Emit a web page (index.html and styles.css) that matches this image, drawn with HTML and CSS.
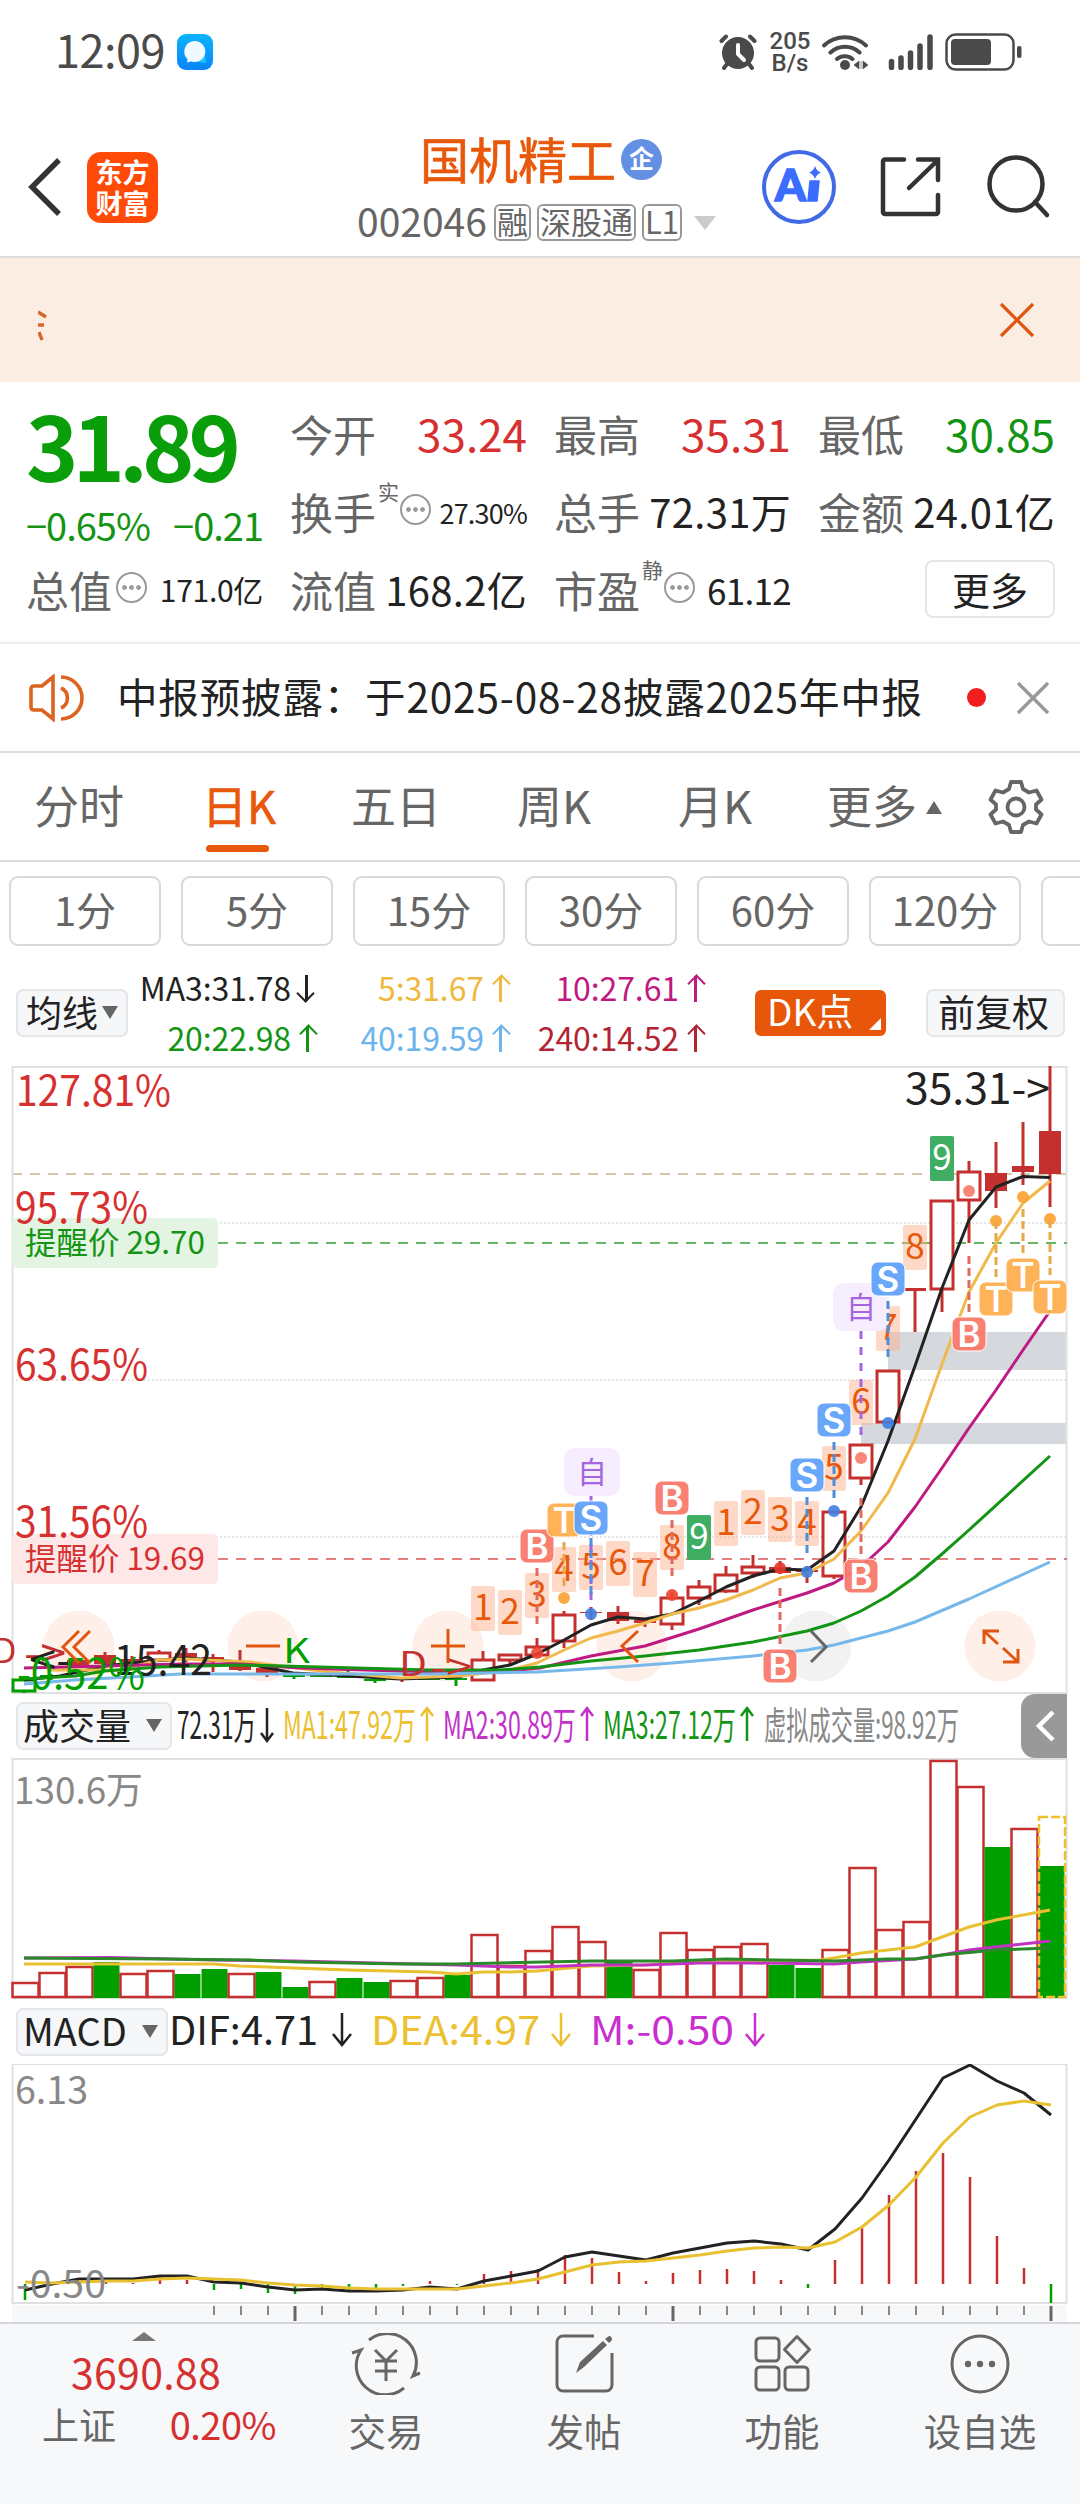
FILE: index.html
```html
<!DOCTYPE html>
<html lang="zh">
<head>
    <meta charset="UTF-8">
    <meta name="viewport" content="width=device-width, initial-scale=1.0">
    <title>国机精工 002046</title>
    <link rel="stylesheet" href="styles.css">
    <script src="chart.js" defer></script>
</head>
<body>
    <!-- 状态栏 -->
    <div class="status-bar">
        <span class="time">12:09</span>
        <svg class="app-dot" width="36" height="36" viewBox="0 0 36 36">
            <defs><linearGradient id="blueBg" x1="0" y1="0" x2="0" y2="1"><stop offset="0" stop-color="#0cb4fb"/><stop offset="1" stop-color="#0a84fa"/></linearGradient></defs>
            <rect width="36" height="36" rx="9" fill="url(#blueBg)"/>
            <path d="M20 24l8-4 1 9-7-1z" fill="#19c8fb"/>
            <path d="M17 7a11 10.500 0 1 1-3 20.500l-4 1 .5-3.500A10.500 10.500 0 0 1 17 7z" fill="#eefaff"/>
        </svg>
        <div class="status-right">
            <svg class="alarm" width="38" height="36" viewBox="0 0 38 36">
                <circle cx="19" cy="19" r="16" fill="#4a4a4a"/>
                <path d="M2.500 7L7 2.500M35.500 7L31 2.500M8 30l-3 4M30 30l3 4" stroke="#4a4a4a" stroke-width="4" stroke-linecap="round"/>
                <path d="M19 11v9l6 6" stroke="#fff" stroke-width="4" stroke-linecap="round" fill="none"/>
            </svg>
            <div class="speed"><span>205</span><span>B/s</span></div>
            <svg class="wifi" width="46" height="36" viewBox="0 0 46 36">
                <path d="M2 11.500a31 31 0 0 1 42 0M8.500 18.500a21 21 0 0 1 29 0M15 25a12 12 0 0 1 15.500 0" stroke="#4a4a4a" stroke-width="4" stroke-linecap="round" fill="none"/>
                <circle cx="23" cy="31" r="5" fill="#4a4a4a"/>
                <path d="M32 31l5-4v8zM39 27v8M46 31l-5-4v8z" fill="#4a4a4a" stroke="#4a4a4a" stroke-width=".6"/>
            </svg>
            <svg class="signal" width="46" height="36" viewBox="0 0 46 36">
                <path d="M3.500 27.500v6M13 24v9.500M22.500 19v14.500M32 12v21.500M42 3v30.500" stroke="#4a4a4a" stroke-width="5.500" stroke-linecap="round"/>
            </svg>
            <svg width="78" height="40" viewBox="0 0 78 40">
                <rect x="1.500" y="2.500" width="67" height="35" rx="9" fill="none" stroke="#4a4a4a" stroke-width="2.500"/>
                <rect x="6" y="7" width="40" height="26" rx="4" fill="#4a4a4a"/>
                <rect x="72" y="14" width="4.500" height="12" rx="2" fill="#4a4a4a"/>
            </svg>
        </div>
    </div>

    <!-- 标题栏 -->
    <div class="nav">
        <svg class="back" width="36" height="60" viewBox="0 0 36 60"><path d="M32 3L5 30l27 27" fill="none" stroke="#333" stroke-width="5.500"/></svg>
        <div class="logo"><span>东方</span><span>财富</span></div>
        <div class="stock">
            <div class="stock-name">国机精工<span class="qi">企</span></div>
            <div class="stock-code">
                <span class="code">002046</span><span class="tag">融</span><span class="tag">深股通</span><span class="tag">L1</span>
                <svg width="24" height="16" viewBox="0 0 24 16"><path d="M1 1h22L12 15z" fill="#ccc"/></svg>
            </div>
        </div>
        <div class="nav-icons">
            <svg width="76" height="76" viewBox="0 0 76 76">
                <circle cx="38" cy="38" r="35" fill="#fff" stroke="#4169e8" stroke-width="4"/>
                <text x="14" y="52" class="ai">A</text>
                <path d="M49 32h9l-2 20h-9z" fill="#3b6bff" stroke="#3b6bff" stroke-width="1.500" stroke-linejoin="round"/>
                <path d="M54 17q1.500 5 6 6.500-4.500 1.500-6 6.500-1.500-5-6-6.500 4.500-1.500 6-6.500z" fill="#3b6bff"/>
            </svg>
            <svg class="share" width="62" height="62" viewBox="0 0 62 62">
                <path d="M24 3.500H5a2 2 0 0 0-2 2V56a2 2 0 0 0 2 2h51a2 2 0 0 0 2-2V39M38 3.500h20V24M57 5L29 32" fill="none" stroke="#333" stroke-width="4.500" stroke-linecap="round"/>
            </svg>
            <svg width="66" height="66" viewBox="0 0 66 66">
                <circle cx="31" cy="30" r="26.500" fill="none" stroke="#333" stroke-width="4.500"/>
                <path d="M50 48l12 13" stroke="#333" stroke-width="4.500" stroke-linecap="round"/>
            </svg>
        </div>
    </div>

    <!-- 滚动横幅 -->
    <div class="banner">
        <svg class="marquee" width="9" height="32" viewBox="0 0 9 32"><path d="M0 2l8 5M0 15h6M1 22l3 8" stroke="#d9642a" stroke-width="3.400" fill="none"/></svg>
        <svg width="36" height="36" viewBox="0 0 36 36"><path d="M2 2l32 32M34 2L2 34" stroke="#e0560f" stroke-width="3.200"/></svg>
    </div>

    <!-- 报价 -->
    <div class="quote">
        <div class="price-box">
            <div class="price">31.89</div>
            <div class="change"><span>−0.65%</span><span>−0.21</span></div>
        </div>
        <div class="cell"><label>今开</label><b class="red">33.24</b></div>
        <div class="cell"><label>最高</label><b class="red">35.31</b></div>
        <div class="cell"><label>最低</label><b class="green">30.85</b></div>
        <div class="cell"><label>换手<sup>实</sup></label><i class="more-dot"></i><b class="small">27.30%</b></div>
        <div class="cell"><label>总手</label><b class="mid">72.31万</b></div>
        <div class="cell"><label>金额</label><b class="mid">24.01亿</b></div>
        <div class="cell"><label>总值</label><i class="more-dot"></i><b class="small2">171.0亿</b></div>
        <div class="cell"><label>流值</label><b class="mid">168.2亿</b></div>
        <div class="cell"><label>市盈<sup>静</sup></label><i class="more-dot"></i><b class="small3">61.12</b></div>
        <div class="cell"><button class="more-btn">更多</button></div>
    </div>

    <!-- 公告 -->
    <div class="notice">
        <svg width="56" height="48" viewBox="0 0 56 48">
            <path d="M24 3L13 12H5q-3 0-3 3v18q0 3 3 3h8l11 9zM32 14a11 11 0 0 1 0 20M32 3a21 21 0 0 1 0 42" fill="none" stroke="#dd6420" stroke-width="3.600"/>
        </svg>
        <span class="notice-text">中报预披露：于2025-08-28披露2025年中报</span>
        <i class="red-dot"></i>
        <svg width="34" height="34" viewBox="0 0 34 34"><path d="M2 2l30 30M32 2L2 32" stroke="#999" stroke-width="3.400"/></svg>
    </div>

    <!-- 周期 -->
    <div class="tabs">
        <span class="tab t1">分时</span>
        <span class="tab t2 active">日K</span>
        <span class="tab t3">五日</span>
        <span class="tab t4">周K</span>
        <span class="tab t5">月K</span>
        <span class="tab t6">更多<svg width="18" height="14" viewBox="0 0 18 14"><path d="M9 0l8 13H1z" fill="#666"/></svg></span>
        <svg class="gear" width="56" height="56" viewBox="0 0 56 56">
            <path d="M23 3h10l2 7 6 3.500 7.500-2 5 9-5.500 5v5l5.500 5-5 9-7.500-2L35 46l-2 7H23l-2-7-6-3.500-7.500 2-5-9 5.500-5v-5l-5.500-5 5-9 7.500 2L21 10z" fill="none" stroke="#666" stroke-width="3.800" stroke-linejoin="round"/>
            <circle cx="28" cy="28" r="8.500" fill="none" stroke="#666" stroke-width="3.800"/>
        </svg>
    </div>
    <div class="minutes">
        <span>1分</span><span>5分</span><span>15分</span><span>30分</span><span>60分</span><span>120分</span><span></span>
    </div>

    <!-- 均线指标 -->
    <div class="ma-bar">
        <div class="sel sel-ma">均线<i class="tri"></i></div>
        <div class="ma-grid">
            <span class="c-black">MA3:31.78<i class="arr down"></i></span>
            <span class="c-yellow">5:31.67<i class="arr"></i></span>
            <span class="c-pink">10:27.61<i class="arr"></i></span>
            <span class="c-green">20:22.98<i class="arr"></i></span>
            <span class="c-blue">40:19.59<i class="arr"></i></span>
            <span class="c-red">240:14.52<i class="arr"></i></span>
        </div>
        <div class="dk">DK点</div>
        <div class="sel sel-fq">前复权</div>
    </div>

    <svg class="chart" id="kChart" width="1080" height="628" viewBox="0 1066 1080 628"></svg>

    <div class="vol-bar">
        <div class="sel sel-vol">成交量<i class="tri"></i></div>
        <svg width="850" height="64" viewBox="171 1694 850 64" id="volText"></svg>
        <div class="fold"><svg width="20" height="32" viewBox="0 0 20 32"><path d="M17 2L3 16l14 14" fill="none" stroke="#fff" stroke-width="4.500"/></svg></div>
    </div>
    <svg class="chart" id="volChart" width="1080" height="242" viewBox="0 1758 1080 242"></svg>

    <div class="macd-bar">
        <div class="sel sel-macd">MACD<i class="tri"></i></div>
        <svg width="800" height="64" viewBox="167 2000 800 64" id="macdText"></svg>
    </div>
    <svg class="chart" id="macdChart" width="1080" height="258" viewBox="0 2064 1080 258"></svg>

    <!-- 底部菜单 -->
    <div class="footer">
        <div class="index">
            <svg width="24" height="9" viewBox="0 0 24 9"><path d="M12 0l12 9H0z" fill="#777"/></svg>
            <div class="index-value">3690.88</div>
            <div class="index-row"><span>上证</span><b>0.20%</b></div>
        </div>
        <div class="menu">
            <svg width="70" height="62" viewBox="0 0 70 62">
                <path d="M18 7A29 29 0 0 1 62 43L69 40M53 55A29 29 0 0 1 10 17L1 20" fill="none" stroke="#666" stroke-width="3"/>
                <path d="M24 17l11 11 11-11M35 28v20M24 28h22M24 38h22" fill="none" stroke="#666" stroke-width="3"/>
            </svg>
            <span>交易</span>
        </div>
        <div class="menu">
            <svg width="60" height="62" viewBox="0 0 60 62">
                <path d="M40 3H9a6 6 0 0 0-6 6v43a6 6 0 0 0 6 6h43a6 6 0 0 0 6-6V20" fill="none" stroke="#666" stroke-width="3"/>
                <path d="M22 40l4-11 23-21 4 4-23 22zM51 6l4-3q3 0 3 4l-3 3z" fill="#666"/>
            </svg>
            <span>发帖</span>
        </div>
        <div class="menu">
            <svg width="60" height="62" viewBox="0 0 60 62">
                <g fill="none" stroke="#666" stroke-width="3"><rect x="4" y="5" width="23" height="23" rx="4"/><rect x="4" y="34" width="23" height="23" rx="4"/><rect x="33" y="34" width="23" height="23" rx="4"/><path d="M45 3.500L57.500 16.500 45 29.500 32.500 16.500z" stroke-linejoin="round"/></g>
            </svg>
            <span>功能</span>
        </div>
        <div class="menu">
            <svg width="62" height="62" viewBox="0 0 62 62">
                <circle cx="31" cy="31" r="28" fill="none" stroke="#666" stroke-width="3"/>
                <g fill="#666"><circle cx="19" cy="31" r="3.200"/><circle cx="31" cy="31" r="3.200"/><circle cx="43" cy="31" r="3.200"/></g>
            </svg>
            <span>设自选</span>
        </div>
    </div>
</body>
</html>
```
FILE: styles.css
```css
* {
    box-sizing: border-box;
}
body {
    margin: 0;
    width: 1080px;
    overflow-x: hidden;
    background: #fff;
    color: #222;
    font-family: "Noto Sans CJK SC", sans-serif;
}
svg {
    display: block;
    flex: none;
}
button {
    font-family: inherit;
}
.red { color: #d63031; }
.green { color: #149414; }

/* 状态栏 */
.status-bar {
    display: flex;
    align-items: center;
    height: 104px;
    padding: 0 57px 0 55px;
    color: #4a4a4a;
}
.time {
    width: 122px;
    font-size: 45px;
    line-height: 64px;
    margin-top: -6px;
    letter-spacing: -.5px;
}
.status-right {
    display: flex;
    align-items: center;
    margin-left: auto;
}
.speed {
    display: flex;
    flex-direction: column;
    width: 46px;
    margin-left: 10px;
    font: 500 24px/22px Roboto, sans-serif;
    text-align: center;
}
.wifi { margin-left: 9px; }
.signal { margin: 0 11px 0 20px; }

/* 标题栏 */
.nav {
    display: flex;
    align-items: center;
    height: 154px;
    padding: 14px 29px 0 27px;
    border-bottom: 2px solid #ddd;
}
.logo {
    display: flex;
    flex-direction: column;
    justify-content: center;
    width: 71px;
    height: 71px;
    margin-left: 24px;
    border-radius: 14px;
    background: #ff4a08;
    color: #fff;
    font-size: 27px;
    font-weight: 700;
    line-height: 31px;
    text-align: center;
}
.stock {
    width: 366px;
    margin-left: 199px;
    margin-top: 11px;
}
.stock-name {
    display: flex;
    align-items: center;
    justify-content: center;
    height: 60px;
    padding-left: 2px;
    color: #e8580a;
    font-size: 49px;
    font-weight: 400;
    -webkit-text-stroke: .6px #e8580a;
}
.qi {
    width: 41px;
    height: 41px;
    margin-left: 5px;
    margin-top: 4px;
    border-radius: 50%;
    background: #6490e4;
    color: #fff;
    font-size: 25px;
    font-weight: 700;
    line-height: 37px;
    text-align: center;
    -webkit-text-stroke: 0;
}
.stock-code {
    display: flex;
    align-items: center;
    height: 70px;
    color: #666;
    font-size: 39px;
    white-space: nowrap;
}
.code {
    width: 137px;
    line-height: 50px;
    margin-top: -6px;
}
.tag {
    flex: none;
    height: 37px;
    padding: 0 1px;
    margin-right: 6px;
    border: 2px solid #999;
    border-radius: 6px;
    font-size: 31px;
    line-height: 29px;
}
.stock-code svg { margin-left: 5px; }
.nav-icons {
    display: flex;
    align-items: center;
    margin-left: auto;
}
.share { margin: 0 43px 0 43px; }
.ai {
    font: 900 44px Lato, sans-serif;
    fill: #3b6bff;
    stroke: #3b6bff;
    stroke-width: 1.5;
}

.banner {
    display: flex;
    align-items: center;
    justify-content: space-between;
    height: 124px;
    padding: 0 45px 0 38px;
    background: #fcede3;
}
.marquee { margin-top: 12px; }

/* 报价 */
.quote {
    display: grid;
    grid-template-columns: repeat(4, 237px);
    grid-auto-rows: 78px;
    column-gap: 27px;
    height: 262px;
    padding: 12px 0 0 26px;
    border-bottom: 2px solid #eee;
}
.price-box {
    grid-row: span 2;
    color: #0a9f0a;
}
.price {
    height: 108px;
    padding-top: 2px;
    font-size: 89px;
    font-weight: 700;
    line-height: 96px;
    letter-spacing: -6px;
}
.change {
    display: flex;
    justify-content: space-between;
    color: #149414;
    font-size: 38px;
    line-height: 46px;
    letter-spacing: -1px;
}
.cell {
    display: flex;
    align-items: center;
    justify-content: space-between;
    white-space: nowrap;
}
.cell label {
    position: relative;
    color: #666;
    font-size: 43px;
}
.cell sup {
    position: absolute;
    left: 88px;
    top: -1px;
    font-size: 21px;
    line-height: 24px;
}
.cell b {
    font-size: 44px;
    font-weight: 400;
}
.cell b.mid { font-size: 40px; letter-spacing: .3px; }
.cell b.small { font-size: 27px; letter-spacing: -.8px; padding-top: 2px; }
.cell b.small2 { font-size: 30px; letter-spacing: -.3px; }
.cell b.small3 { font-size: 35px; letter-spacing: -.7px; }
.more-dot {
    width: 31px;
    height: 31px;
    border: 2px solid #999;
    border-radius: 50%;
    margin: 0 0 3px 4px;
    background: radial-gradient(circle, #999 2px, transparent 2.6px) center / 7px 7px;
    background-size: 7px 31px;
    background-repeat: repeat-x;
    background-clip: content-box;
    padding: 0 3px;
}
sup { display: block; }
.cell label:has(sup) + .more-dot { margin-left: 24px; }
.cell .small, .cell .small2, .cell .small3 { margin-left: auto; }
.more-btn {
    width: 130px;
    height: 58px;
    margin-left: auto;
    border: 2px solid #e6e6e6;
    border-radius: 8px;
    background: #fff;
    color: #222;
    font-size: 38px;
    line-height: 46px;
    padding: 0;
}

.notice {
    display: flex;
    align-items: center;
    height: 109px;
    padding: 0 30px 0 29px;
    border-bottom: 2px solid #ddd;
}
.notice-text {
    width: 848px;
    margin: -5px 0 0 32px;
    font-size: 40.5px;
    white-space: nowrap;
    letter-spacing: .85px;
}
.red-dot {
    width: 19px;
    height: 19px;
    margin-left: 3px;
    margin-right: 30px;
    border-radius: 50%;
    background: #f21d1d;
}

/* 周期 */
.tabs {
    display: flex;
    align-items: center;
    height: 109px;
    padding-left: 34px;
    border-bottom: 2px solid #ddd;
    color: #666;
    font-size: 45px;
}
.tab {
    position: relative;
    display: flex;
    align-items: center;
    height: 107px;
    padding-bottom: 4px;
}
.t1 { width: 168px; }
.t2 { width: 149px; }
.t3 { width: 166px; }
.t4 { width: 161px; }
.t5 { width: 149px; }
.t6 { width: 161px; }
.t6 svg { margin: 6px 0 0 8px; }
.active {
    color: #e8580a;
    font-weight: 400;
    -webkit-text-stroke: .6px #e8580a;
}
.active::after {
    content: "";
    position: absolute;
    left: 4px;
    bottom: 8px;
    width: 63px;
    height: 7px;
    border-radius: 4px;
    background: #e8580a;
}
.minutes {
    display: flex;
    gap: 20px;
    height: 98px;
    padding: 14px 0 0 9px;
    overflow: hidden;
    color: #666;
}
.minutes span {
    flex: 0 0 152px;
    height: 70px;
    border: 2px solid #d8d8d8;
    border-radius: 9px;
    font-size: 40px;
    line-height: 62px;
    text-align: center;
}

/* 指标栏 */
.ma-bar {
    display: flex;
    align-items: center;
    height: 106px;
    padding-left: 16px;
}
.sel {
    display: flex;
    align-items: center;
    justify-content: space-between;
    height: 48px;
    padding: 0 8px;
    border: 2px solid #e4e6ea;
    border-radius: 7px;
    background: #f6f7f9;
    color: #222;
    font-size: 36px;
    line-height: 40px;
    white-space: nowrap;
}
.tri {
    border: 8px solid transparent;
    border-top: 13px solid #666;
    border-bottom: 0;
}
.sel-ma { width: 112px; padding: 0 8px 4px; margin-top: -1px; }
.sel-fq { width: 139px; padding: 0 10px 4px; margin: -1px 0 0 40px; font-size: 37px; }
.sel-ma .tri { margin-top: 4px; }
.sel-vol { width: 156px; padding: 0 8px 4px 5px; margin-top: 0; }
.sel-macd { width: 152px; padding: 0 8px 4px 5px; font-size: 38px; margin-top: -1px; }
.sel-vol .tri, .sel-macd .tri { margin-top: 3px; }
.ma-grid {
    display: grid;
    grid-template-columns: 187px 193px 195px;
    grid-auto-rows: 50px;
    font-size: 32px;
    margin-top: -3px;
}
.ma-grid span {
    display: flex;
    align-items: center;
    justify-content: flex-end;
    letter-spacing: -.1px;
}
.arr {
    position: relative;
    width: 16px;
    height: 27px;
    margin: 3px 0 0 8px;
}
.arr::before {
    content: "";
    position: absolute;
    left: 7px;
    top: 1px;
    width: 2.5px;
    height: 26px;
    background: currentColor;
}
.arr::after {
    content: "";
    position: absolute;
    left: 2.5px;
    top: 2px;
    width: 11px;
    height: 11px;
    border: solid currentColor;
    border-width: 2.5px 0 0 2.5px;
    transform: rotate(45deg);
}
.down { transform: rotate(180deg); }
.c-black { color: #222; }
.c-yellow { color: #f0b840; }
.c-pink { color: #bf1a80; }
.c-green { color: #149414; }
.c-blue { color: #6cb4ec; }
.c-red { color: #b22430; }
.dk {
    position: relative;
    width: 131px;
    height: 46px;
    margin: -1px 0 0 52px;
    padding-left: 12px;
    border-radius: 6px;
    background: #e8560a;
    color: #fff;
    font-size: 37px;
    line-height: 40px;
}
.dk::after {
    content: "";
    position: absolute;
    right: 5px;
    bottom: 6px;
    border-left: 12px solid transparent;
    border-bottom: 12px solid #fff;
}
.vol-bar, .macd-bar {
    display: flex;
    align-items: center;
    height: 64px;
    padding-left: 16px;
}
.fold {
    display: flex;
    align-items: center;
    justify-content: center;
    width: 46px;
    height: 64px;
    margin-left: -1px;
    border-radius: 14px 0 0 14px;
    background: #999;
}
.fold svg { margin-left: 3px; }
.chart text { font-family: "Noto Sans CJK SC", sans-serif; }
.chart .mark { font-family: Inter, sans-serif; font-weight: 600; }

/* 底部 */
.footer {
    display: flex;
    height: 182px;
    border-top: 2px solid #d4d5d8;
    background: #f6f8fa;
    color: #666;
}
.index {
    width: 287px;
    padding-top: 8px;
}
.index svg { margin-left: 132px; }
.index-value {
    height: 58px;
    margin: 1px 0 0 71px;
    color: #d63031;
    font-size: 41px;
    line-height: 58px;
    letter-spacing: .3px;
}
.index-row {
    display: flex;
    justify-content: space-between;
    padding: 3px 11px 0 42px;
    font-size: 37px;
    line-height: 42px;
}
.index-row b { color: #d63031; font-weight: 400; font-size: 38px; letter-spacing: -.5px; }
.menu {
    display: flex;
    flex-direction: column;
    align-items: center;
    width: 198px;
    padding-top: 9px;
    font-size: 37.5px;
    line-height: 50px;
}
.menu span { margin-top: 10px; }
```
FILE: chart.js
```javascript
const RED = '#c4302f', GREEN = '#009f00', STEP = 27, X0 = 24;
const cx = i => X0 + STEP * i;

function line(x1, y1, x2, y2, color, w = 2, dash = '') {
    return `<line x1="${x1}" y1="${y1}" x2="${x2}" y2="${y2}" stroke="${color}" stroke-width="${w}" stroke-dasharray="${dash}"/>`;
}
function rect(x, y, w, h, fill, extra = '') {
    return `<rect x="${x}" y="${y}" width="${w}" height="${h}" fill="${fill}" ${extra}/>`;
}
function poly(pts, color, w = 3) {
    return `<polyline points="${pts}" fill="none" stroke="${color}" stroke-width="${w}" stroke-linejoin="round"/>`;
}
// len 为文字占用宽度
function text(s, x, y, size, color, len, extra = '') {
    const fit = len ? `textLength="${len}" lengthAdjust="spacingAndGlyphs"` : '';
    return `<text x="${x}" y="${y}" font-size="${size}" fill="${color}" ${fit} ${extra}>${s}</text>`;
}
function arrow(x, top, bottom, up, color, r = 6) {
    const t = up ? top : bottom, d = up ? r + 2 : -r - 2;
    return `<path d="M${x} ${top}V${bottom}M${x - r} ${t + d}L${x} ${t}L${x + r} ${t + d}" fill="none" stroke="${color}" stroke-width="2.5"/>`;
}
function frame(top, bottom) {
    return `<rect x="12.500" y="${top}" width="1054" height="${bottom - top}" fill="none" stroke="#e0e0e0" stroke-width="2"/>`;
}

// [最高, 实体上, 实体下, 最低, 类型] r空心 R实心 g空心绿 G实心绿
const candles = [
    [1680, 1680, 1691, 1693, 'g'], [1674, 1675, 1678, 1680, 'G'], [1658, 1660, 1666, 1668, 'R'], [1652, 1655, 1664, 1666, 'R'],
    [1656, 1659, 1662, 1664, 'R'], [1650, 1653, 1660, 1662, 'r'], [1648, 1653, 1657, 1662, 'R'], [1654, 1657, 1662, 1672, 'R'],
    [1650, 1664, 1670, 1671, 'R'], [1666, 1668, 1674, 1677, 'R'], [1672, 1675, 1677, 1679, 'G'], [1674, 1675, 1677, 1677, 'G'],
    [1668, 1676, 1678, 1678, 'G'], [1678, 1679, 1681, 1683, 'G'], [1677, 1678, 1680, 1682, 'R'], [1677, 1678, 1680, 1680, 'G'],
    [1675, 1678, 1680, 1686, 'G'], [1651, 1660, 1680, 1681, 'r'], [1654, 1655, 1660, 1665, 'r'], [1638, 1647, 1655, 1656, 'r'],
    [1611, 1615, 1641, 1648, 'r'], [1607, 1612, 1613, 1620, 'R'], [1606, 1612, 1621, 1624, 'R'], [1618, 1620, 1623, 1627, 'R'],
    [1593, 1598, 1624, 1630, 'r'], [1580, 1587, 1598, 1605, 'r'], [1566, 1575, 1591, 1593, 'r'], [1555, 1567, 1573, 1578, 'r'],
    [1561, 1567, 1573, 1574, 'R'], [1566, 1570, 1572, 1583, 'R'], [1511, 1512, 1576, 1579, 'r'], [1444, 1445, 1478, 1485, 'r'],
    [1370, 1371, 1422, 1424, 'r'], [1288, 1288, 1291, 1332, 'R'], [1200, 1201, 1289, 1312, 'r'], [1161, 1172, 1200, 1243, 'r'],
    [1142, 1173, 1191, 1208, 'R'], [1122, 1166, 1172, 1185, 'R'], [1066, 1131, 1174, 1207, 'R']
];

function drawK() {
    let s = rect(888, 1332, 179, 38, '#d5d8dd') + rect(861, 1423, 206, 21, '#d5d8dd');
    [1223, 1380, 1537].forEach(y => s += line(12, y, 1067, y, '#ddd', 1.5, '2 2'));
    s += line(12, 1174, 1067, 1174, '#d5c8a8', 2, '10 8');
    s += frame(1067, 1693);
    s += rect(12, 1218, 206, 50, '#e3f4e3', 'rx="5"') + rect(12, 1534, 206, 50, '#fee7e7', 'rx="5"');
    s += line(218, 1243, 1067, 1243, '#66b766', 2, '10 8') + line(218, 1559, 1067, 1559, '#e08080', 2, '10 8');
    s += text('提醒价 29.70', 25, 1254, 31, '#149414', 180) + text('提醒价 19.69', 25, 1570, 31, '#d63031', 180);
    s += text('127.81%', 16, 1106, 42, '#d63031', 155);
    [['95.73%', 1223], ['63.65%', 1380], ['31.56%', 1537]].forEach(t => s += text(t[0], 15, t[1], 42, '#d63031', 133));

    // 操作按钮底
    [79, 263, 448, 632, 816, 1000].forEach(x => s += `<circle cx="${x}" cy="1646" r="35.500" fill="${x === 816 ? '#f2f2f2' : '#fef0e9'}"/>`);

    candles.forEach((c, i) => {
        const x = cx(i), color = /g/i.test(c[4]) ? GREEN : RED, solid = /[RG]/.test(c[4]);
        s += line(x, c[0], x, c[1], color, 3) + line(x, c[2], x, c[3], color, 3);
        s += rect(x - 11, c[1], 22, Math.max(c[2] - c[1], 1), solid ? color : '#fff', `stroke="${color}" stroke-width="${solid ? 0 : 3}"`);
    });

    s += poly('24,1680 60,1676 105,1666 132,1663 186,1658 240,1662 293,1673 348,1676 400,1679 458,1677 483,1670 510,1665 537,1654 564,1640 591,1625 618,1617 645,1619 672,1614 699,1601 726,1587 753,1576 780,1569 807,1570 834,1551 861,1507 888,1441 915,1366 942,1288 969,1220 996,1187 1023,1176.500 1050,1177.500', '#222', 3);
    s += poly('50,1670 120,1670 159,1660 186,1659 250,1662 320,1671 400,1678 460,1676 510,1670 537,1663 564,1650 591,1638 618,1631 645,1623 672,1614 699,1608 726,1600 753,1590 780,1578 807,1573 834,1559 861,1531 888,1493 915,1439 942,1364 969,1292 996,1243 1023,1203 1050,1181', '#f0b94c');
    s += poly('24,1668 105,1666 180,1664 240,1664 300,1668 430,1672 510,1671 540,1668 591,1656 645,1646 699,1629 753,1610 807,1593 834,1583 861,1567 888,1542 915,1507 942,1468 969,1428 996,1390 1023,1350 1050,1311', '#bf1a80');
    s += poly('24,1679 75,1676 105,1671 160,1667 240,1665 320,1667 430,1670 500,1670 540,1667 591,1661 645,1656 699,1650 753,1642 807,1631 834,1623 861,1611 888,1596 915,1577 942,1554 969,1530 1050,1456', '#149414');
    s += poly('24,1684 75,1680 130,1677 180,1674 430,1674 537,1672 618,1667 672,1663 753,1656 807,1650 834,1645 861,1638 888,1631 915,1622 969,1599 1050,1562', '#76b8ea');

    // DK 标注与最高最低价
    s += text('D', -7, 1663, 34, RED) + text('-&gt;', 24, 1668, 40, RED, 42);
    s += text('K', 283, 1663, 34, GREEN, 27) + text('D', 399, 1676, 34, RED, 28) + text('-&gt;', 430, 1681, 38, RED, 42);
    s += text('&lt;-', 29, 1675, 42, '#222', 44) + text('15.42', 114, 1675, 41, '#222', 98);
    s += text('-0.52%', 17, 1689, 42, GREEN, 128);
    s += text('35.31-&gt;', 905, 1104, 42, '#222', 145);

    // 九转序列 [序号, 数字, 顶部]
    [[17, 1, 1586], [18, 2, 1590], [19, 3, 1573], [20, 4, 1547], [21, 5, 1545], [22, 6, 1541], [23, 7, 1552], [24, 8, 1525], [25, 9, 1515],
     [26, 1, 1501], [27, 2, 1490], [28, 3, 1497], [29, 4, 1501], [30, 5, 1446], [31, 6, 1380], [32, 7, 1306], [33, 8, 1225], [34, 9, 1136]].forEach(n => {
        const nine = n[1] === 9;
        s += rect(cx(n[0]) - 12, n[2], 24, 45, nine ? '#3fae62' : '#fcb08c', nine ? 'rx="2"' : 'rx="2" fill-opacity=".48"');
        s += text(n[1], cx(n[0]), n[2] + 34, 35, nine ? '#fff' : '#e8580a', 0, 'text-anchor="middle"');
    });

    const C = { B: '#f9796b', S: '#5fa2fa', T: '#feae4e', P: '#a565e0' };
    // 圆点
    [[537, 1653, '#f0442f'], [564, 1598, '#fca130'], [591, 1614, '#3f7fe0'], [672, 1595, '#f0442f'], [780, 1568, '#e8382c'], [807, 1572, '#3f7fe0'],
     [834, 1511, '#3f7fe0'], [861, 1458, C.B], [888, 1423, '#3f7fe0'], [969, 1191, C.B], [996, 1221, '#fca130'], [1023, 1197, '#fca130'], [1050, 1219, '#fca130']]
        .forEach(d => s += `<circle cx="${d[0]}" cy="${d[1]}" r="6" fill="${d[2]}" fill-opacity=".9"/>`);
    // 自选标记
    [[592, 1472], [861, 1307]].forEach(p => {
        s += rect(p[0] - 28, p[1] - 24, 56, 48, '#f6edff', 'rx="11"') + text('自', p[0], p[1] + 11, 30, '#a565e0', 0, 'text-anchor="middle"');
    });
    [[591, 1496, 1608, C.P], [861, 1331, 1442, C.P], [537, 1568, 1625, '#e06a60'], [564, 1542, 1590, '#e8a848'], [591, 1538, 1598, '#4f8fe8'], [672, 1520, 1578, '#e06a60'],
     [807, 1497, 1553, '#4f8fd8'], [834, 1442, 1500, '#4f8fd8'], [861, 1498, 1555, '#e06a60'], [780, 1588, 1645, '#e06a60'], [888, 1301, 1357, '#4f8fd8'],
     [969, 1256, 1312, '#e06a60'], [996, 1221, 1278, '#e8a848'], [1023, 1209, 1253, '#e8a848'], [1050, 1220, 1275, '#e8a848']]
        .forEach(d => s += line(d[0], d[1], d[0], d[2], d[3], 3, d[3] === C.P ? '8 8' : '8 4'));
    [['B', 537, 1546], ['T', 564, 1520], ['S', 591, 1518], ['B', 672, 1498], ['S', 807, 1475], ['S', 834, 1420], ['B', 861, 1576], ['B', 780, 1666],
     ['S', 888, 1279], ['B', 969, 1334], ['T', 996, 1299], ['T', 1023, 1275], ['T', 1050, 1297]].forEach(m => {
        s += rect(m[1] - 17, m[2] - 17, 34, 34, C[m[0]], 'rx="7" fill-opacity=".94" stroke="#fff" stroke-width="1"');
        s += text(m[0], m[1], m[2] + 12.5, 35, '#fff', 0, 'text-anchor="middle" class="mark"');
    });
    // 操作按钮图标
    s += `<g fill="none" stroke="#e0560f" stroke-width="3"><path d="M79 1631l-16 16 16 16M90 1631l-16 16 16 16M246 1646h34M431 1646h34M448 1629v34M638 1631l-16 15 16 16"/>
        <path d="M984 1644v-13h15M985 1632l13 12M1018 1649v13h-15M1017 1661l-14-13"/><path d="M811 1631l15 16-15 15" stroke="#666"/></g>`;
    document.getElementById('kChart').innerHTML = s;
}

function drawVol() {
    const bars = 'r1982 r1972 r1966 g1962 r1973 r1970 g1974 g1969 r1973 g1972 g1987 r1981 g1978 g1982 r1980 r1977 g1975 r1934 r1965 r1950 r1926 r1941 g1961 r1969 r1932 r1949 r1946 r1943 g1965 g1968 r1949 r1867 r1929 r1921 r1760 r1786 g1847 r1828 g1866'.split(' ');
    let s = frame(1759, 1998) + text('130.6万', 14, 1804, 37, '#888', 129);
    bars.forEach((b, i) => {
        const y = +b.slice(1), x = cx(i) - 12;
        s += b[0] === 'r'
            ? rect(x + .5, y + 1, 26, 1996 - y, '#fff', `stroke="${RED}" stroke-width="2.500"`)
            : rect(x + .5, y, 26, 1998 - y, GREEN);
    });
    s += rect(1039, 1817, 26, 180, 'none', 'stroke="#eec030" stroke-width="2.500" stroke-dasharray="9 3"');
    s += poly('24,1964 213,1964 240,1966 294,1968 348,1970 430,1972 456,1974 483,1972 510,1972 537,1971 591,1966 645,1965 672,1963 753,1961 820,1960 834,1958 861,1953 888,1950 915,1947 942,1937 969,1927 996,1920 1023,1915 1050,1910', '#e8c030');
    s += poly('24,1958 110,1957.500 213,1960 294,1961 456,1965 510,1967 537,1967 591,1965 645,1965 699,1963 753,1963 834,1964 861,1962 915,1959 942,1955 969,1950 1050,1941', '#c232c2');
    s += poly('24,1958 160,1959 250,1960 300,1962 400,1964 456,1964 591,1961 672,1961 726,1959 834,1961 888,1959 915,1959 942,1955 996,1950 1050,1948', '#2a8a2a');
    document.getElementById('volChart').innerHTML = s;

    document.getElementById('volText').innerHTML =
        text('72.31万', 176, 1739, 38, '#222', 79) + arrow(266, 1708, 1741, false, '#222') +
        text('MA1:47.92万', 282, 1739, 38, '#ecc030', 133) + arrow(426, 1708, 1741, true, '#ecc030') +
        text('MA2:30.89万', 442, 1739, 38, '#c232c8', 133) + arrow(586, 1708, 1741, true, '#c232c8') +
        text('MA3:27.12万', 602, 1739, 38, '#149414', 133) + arrow(746, 1708, 1741, true, '#149414') +
        text('虚拟成交量:98.92万', 763, 1739, 38, '#888', 195);
}

function drawMacd() {
    const hist = [2300, 2285, 2281, 2282, 2283, 2277, 2280, 2290, 2289, 2293, 2294, 2290, 2290, 2289, 2286, 2281, 2285, 2274, 2271, 2269, 2255, 2258, 2272, 2281, 2273, 2270, 2269, 2271, 2280, 2288, 2260, 2226, 2195, 2171, 2153, 2177, 2236, 2268, 2303];
    const dif = [2290, 2284, 2279, 2279, 2279, 2276, 2276, 2282, 2283, 2287, 2290, 2289, 2291, 2291, 2290, 2287, 2289, 2281, 2276, 2271, 2257, 2252, 2256, 2260, 2253, 2248, 2243, 2241, 2244, 2250, 2229, 2198, 2160, 2119, 2078, 2065, 2081, 2093, 2115];
    const dea = [2282, 2283, 2282, 2281, 2281, 2279, 2278, 2279, 2280, 2283, 2285, 2286, 2288, 2289, 2289, 2289, 2289, 2286, 2283, 2279, 2272, 2265, 2262, 2261, 2258, 2255, 2251, 2248, 2247, 2248, 2242, 2227, 2205, 2177, 2143, 2117, 2105, 2101, 2105];
    let s = frame(2064, 2303) + rect(12, 2305, 1055, 17, '#f7f8fa');
    s += text('6.13', 15, 2104, 38, '#888', 73);
    hist.forEach((y, i) => s += line(cx(i) + 1, 2284, cx(i) + 1, y, y < 2284 ? RED : GREEN, 2.5));
    s += poly(dif.map((y, i) => cx(i) + 1 + ',' + y).join(' '), '#222');
    s += poly(dea.map((y, i) => cx(i) + 1 + ',' + y).join(' '), '#e8c030');
    s += text('-0.50', 16, 2298, 38, '#888', 90);
    for (let i = 7; i < 39; i++) {
        const major = i === 10 || i === 24 || i === 38;
        s += line(cx(i) + 1, 2306, cx(i) + 1, major ? 2321 : 2315, '#666', major ? 3 : 1.5);
    }
    document.getElementById('macdChart').innerHTML = s;

    document.getElementById('macdText').innerHTML =
        text('DIF:4.71', 168, 2045, 39, '#222', 149) + arrow(341, 2013, 2045, false, '#222', 9) +
        text('DEA:4.97', 370, 2045, 39, '#ecc030', 169) + arrow(560, 2013, 2045, false, '#ecc030', 9) +
        text('M:-0.50', 589, 2045, 39, '#c92fd0', 144) + arrow(754, 2013, 2045, false, '#c92fd0', 9);
}

drawK();
drawVol();
drawMacd();
```
